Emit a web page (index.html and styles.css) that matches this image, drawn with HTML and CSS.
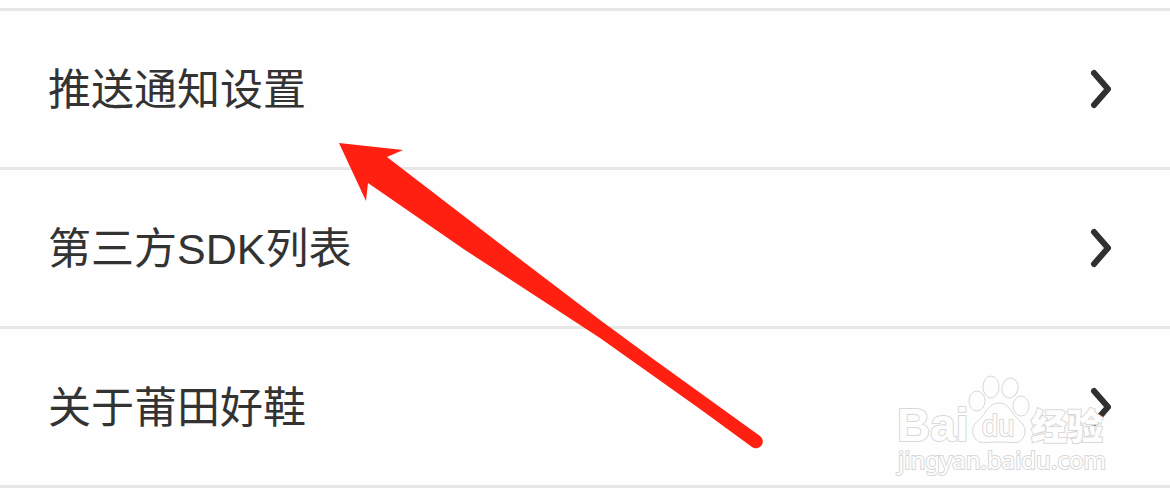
FILE: index.html
```html
<!DOCTYPE html>
<html lang="zh-CN">
<head>
<meta charset="utf-8">
<meta name="viewport" content="width=device-width, initial-scale=1">
<title>设置</title>
<link rel="stylesheet" href="styles.css">
</head>
<body>
<main class="settings">
  <nav class="menu">
    <a class="row" href="#push"><span>推送通知设置</span>
      <svg class="chevron" viewBox="0 0 22 42" aria-hidden="true"><path d="M4 4 18 20 4 36"/></svg></a>
    <a class="row" href="#sdk"><span>第三方SDK列表</span>
      <svg class="chevron" viewBox="0 0 22 42" aria-hidden="true"><path d="M4 4 18 20 4 36"/></svg></a>
    <a class="row" href="#about"><span>关于莆田好鞋</span>
      <svg class="chevron" viewBox="0 0 22 42" aria-hidden="true"><path d="M4 4 18 20 4 36"/></svg></a>
  </nav>
  <svg class="arrow" viewBox="0 0 426 306" aria-hidden="true">
    <path d="M0 0 64 7 48 14 169 107 261 177 310 213 421 293A6.500 6.500 0 0 1 413 304L361 266 261 195 126 107 29 40 27 58Z"/>
  </svg>
  <svg class="watermark" viewBox="0 0 220 106" role="img" aria-label="Baidu经验">
    <g class="paw">
      <ellipse cx="84" cy="31" rx="8" ry="10"/>
      <ellipse cx="98" cy="17" rx="8" ry="11"/>
      <ellipse cx="117" cy="18" rx="8" ry="10" transform="rotate(12 117 18)"/>
      <ellipse cx="128" cy="36" rx="8" ry="10"/>
      <path d="M106 33c-11 0-13 11-20 17-7 5-8 12-4 18 4 7 11 4 24 4s20 3 24-4c4-6 2-13-4-18-8-6-9-17-20-17Z"/>
    </g>
    <text class="brand" x="4" y="71">Bai</text>
    <text class="du" x="89" y="66">du</text>
    <text class="suffix" x="138" y="70">经验</text>
    <text class="site" x="5" y="99">jingyan.baidu.com</text>
  </svg>
</main>
</body>
</html>
```
FILE: styles.css
```css
* {
  box-sizing: border-box;
}

body {
  margin: 0;
  background: #fefefe;
  font-family: "Liberation Sans", "Noto Sans CJK SC", sans-serif;
}

.settings {
  position: relative;
  padding: 8px 0 14px;
  overflow: hidden;
}

.menu {
  border-top: 3px solid #e7e7e7;
}

.row {
  display: flex;
  align-items: center;
  justify-content: space-between;
  padding: 47px 58px 45px 48px;
  border-bottom: 3px solid #e7e7e7;
  color: #333;
  font-size: 43px;
  line-height: 64px;
  text-decoration: none;
}

.chevron {
  width: 22px;
  height: 42px;
  fill: none;
  stroke: #303030;
  stroke-width: 6;
  stroke-linecap: round;
  stroke-linejoin: round;
}

.arrow {
  position: absolute;
  top: 143px;
  left: 339px;
  width: 426px;
  height: 306px;
  fill: #ff2012;
}

.watermark {
  position: absolute;
  top: 370px;
  right: 57px;
  width: 220px;
  height: 106px;
  fill: #fefefe;
  stroke: #d8d8d8;
  stroke-width: 1;
}

.watermark text {
  paint-order: stroke;
  stroke-width: 2;
}

.brand {
  font-size: 46px;
  font-weight: 700;
}

.du {
  font-size: 29px;
}

.suffix {
  font-size: 36px;
  font-weight: 900;
}

.site {
  font-family: "Noto Sans", sans-serif;
  font-size: 24px;
}
```
